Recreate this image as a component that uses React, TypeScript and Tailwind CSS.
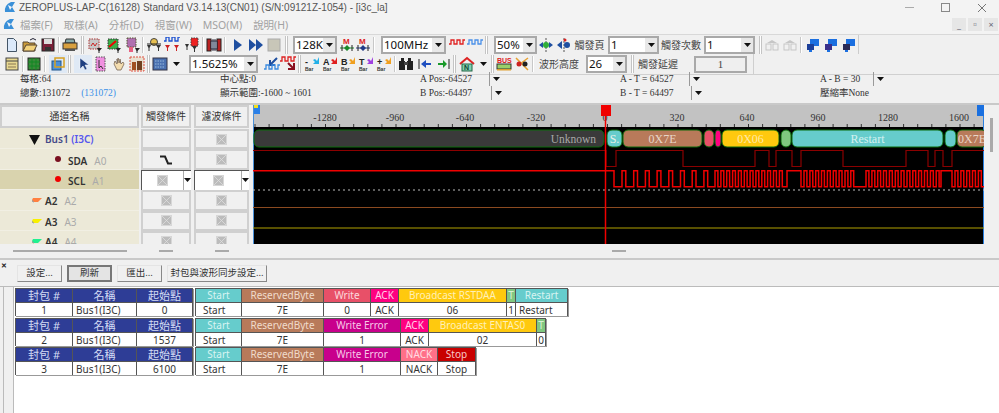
import React from "react";

const Svg = ({ children, w = 16 }: { children: React.ReactNode; w?: number }) => (
  <svg width={w} height={16} viewBox={`0 0 ${w} 16`} className="block shrink-0">
    {children}
  </svg>
);

const Btn = ({ children, on }: { children: React.ReactNode; on?: boolean }) => (
  <div className={`flex h-[18px] w-[18px] shrink-0 items-center justify-center ${on ? "bg-[#dfe9f5]" : ""}`}>{children}</div>
);

const Sep = () => <div className="mx-[1px] h-[16px] w-[2px] shrink-0 border-l border-[#c8c8c8] bg-white" />;
const Grip = () => <div className="mx-[1px] h-[18px] w-[3px] shrink-0 border-x border-[#c4c4c4] bg-white" />;

const Down = () => (
  <svg width="7" height="4" viewBox="0 0 7 4" className="block shrink-0">
    <path d="M0 0h7L3.5 4z" fill="#111" />
  </svg>
);

const Combo = ({ text, w }: { text: string; w: string }) => (
  <div className={`flex h-[18px] shrink-0 items-stretch border-2 border-[#a9a9a9] bg-white ${w}`}>
    <span className="flex-1 overflow-hidden pl-[1px] font-['Noto_Sans',sans-serif] text-[11.5px] leading-[14px] text-[#111]">{text}</span>
    <span className="flex w-[12px] shrink-0 items-center justify-center bg-[#e8e8e8]">
      <Down />
    </span>
  </div>
);

const Label = ({ text, w }: { text: string; w: string }) => (
  <span className={`shrink-0 text-center text-[10px] leading-[18px] text-[#444] ${w}`}>{text}</span>
);

const Chip = ({ c, s }: { c: string; s?: string }) => <rect x="3" y="2" width="10" height="10" fill={c} stroke={s ?? "#555"} strokeDasharray="1.5 1" />;
const Probe = ({ x = 11, c = "#222" }: { x?: number; c?: string }) => <path d={`M${x} 11h5l-2.5 3v2h-1v-2z`} fill={c} />;
const Wave = ({ c, y = 6 }: { c: string; y?: number }) => (
  <path d={`M0 ${y + 4}h2v-4h3v4h3v-4h3v4h3v-4h2`} fill="none" stroke={c} strokeWidth="1.3" />
);
const BlueNet = ({ d = "#1c3f99" }: { d?: string }) => (
  <>
    <rect x="5" y="2" width="9" height="7" fill="#1b6fe0" />
    <rect x="2" y="7" width="7" height="6" fill={d} />
    <rect x="4" y="13" width="3" height="2" fill="#1b6fe0" />
  </>
);
const Gray = () => (
  <>
    <path d="M3 6l5-3 5 3z" fill="#c6c6c6" />
    <rect x="2" y="7" width="5" height="6" fill="none" stroke="#c6c6c6" />
    <rect x="9" y="7" width="5" height="6" fill="none" stroke="#c6c6c6" />
  </>
);
const BarIc = ({ a, t }: { a: string; t: string }) => (
  <>
    <text x="1" y="9" fontSize="9" fontWeight="700" fill="#222" fontFamily="Liberation Sans">{t}</text>
    <path d="M15 1v7H9l2-2-2-2 2-1 2 2z" fill={a} />
    <text x="1" y="15" fontSize="5" fontWeight="700" fill="#333" fontFamily="Liberation Sans">Bar</text>
  </>
);
const MIc = ({ c }: { c: string }) => (
  <>
    <text x="4" y="7" fontSize="8" fontWeight="700" fill="#d22" fontFamily="Liberation Sans">M</text>
    <path d="M1 11h14" stroke={c} strokeWidth="1" />
    <path d="M3 8v6M13 8v6" stroke="#222" />
    <path d="M5 11l3-3v6zM11 11l-3-3v6z" fill={c} />
  </>
);

const Row1 = () => (
  <div className="flex h-[19px] items-center pl-[3px]">
    <Btn><Svg><path d="M3.5 1.5h6l3 3v10h-9z" fill="#dbe9fa" stroke="#456" /></Svg></Btn>
    <Btn><Svg><path d="M1 5h5l1 1h6v8H1z" fill="#c99a3a" stroke="#543" /><path d="M4 8h11l-3 6H1z" fill="#f3d27a" stroke="#543" /><path d="M8 3q3-3 6 0" fill="none" stroke="#223" /></Svg></Btn>
    <Btn><Svg><rect x="2" y="2" width="12" height="12" fill="#7a2038" stroke="#222" /><rect x="4" y="2" width="8" height="5" fill="#ddd" /><rect x="5" y="10" width="6" height="4" fill="#333" /></Svg></Btn>
    <Sep />
    <Btn><Svg><path d="M4 2h8l1 4H3z" fill="#8aa" stroke="#333" /><rect x="1" y="6" width="14" height="6" fill="#d8a040" stroke="#333" /><rect x="3" y="12" width="10" height="2" fill="#555" /></Svg></Btn>
    <div className="w-[1px]" />
    <Grip />
    <Btn><Svg><Chip c="#c8c8c8" s="#a33" /><path d="M5 9l2-3 2 3 2-3" stroke="#c22" fill="none" /><Probe /></Svg></Btn>
    <div className="w-[1px]" />
    <Btn><Svg><Chip c="#39b04a" s="#333" /><path d="M4 10l7-6" stroke="#e00" strokeWidth="2" /><Probe /></Svg></Btn>
    <div className="w-[1px]" />
    <Btn><Svg><rect x="3" y="1" width="9" height="9" fill="#b070b0" stroke="#553" strokeDasharray="1.5 1" /><rect x="5" y="10" width="4" height="5" fill="#e86080" /><Probe /></Svg></Btn>
    <Sep />
    <Btn><Svg><circle cx="8" cy="5" r="3.5" fill="#e8c050" stroke="#444" /><path d="M1 7h14" stroke="#222" /><path d="M1 8h4l-1.500 3v3h-1v-3zM10 8h5l-2 3v3h-1v-3z" fill="#333" /></Svg></Btn>
    <Btn><Svg><Wave c="#1b50d0" y={0} /><path d="M1 8h5l-2 3v3H3v-3zM10 8h5l-2 3v3h-1v-3z" fill="#c22" /></Svg></Btn>
    <div className="w-[2px]" />
    <Btn><Svg><rect x="7" y="1" width="7" height="8" fill="#e22" stroke="#444" strokeDasharray="1.5 1" /><path d="M1 7h4l-1.500 3v3h-1v-3zM8 9h5l-2 3v3h-1v-3z" fill="#333" /></Svg></Btn>
    <Sep />
    <Btn><Svg><rect x="1" y="2" width="4" height="12" fill="#b22" stroke="#222" /><rect x="11" y="2" width="4" height="12" fill="#b22" stroke="#222" /><path d="M5 4h6v8H5z" fill="#cfe0f0" stroke="#223" /><path d="M7 2v12M9 2v12" stroke="#334" /></Svg></Btn>
    <Sep />
    <div className="w-[2px]" />
    <Btn><Svg><path d="M4 2l8 6-8 6z" fill="#1f4fa0" /></Svg></Btn>
    <Btn><Svg><path d="M1 2l7 6-7 6zM8 2l7 6-7 6z" fill="#1f4fa0" /></Svg></Btn>
    <Btn><Svg><rect x="2" y="2" width="12" height="12" fill="#c8c6b8" stroke="#aaa" /></Svg></Btn>
    <div className="w-[1px]" />
    <Grip />
    <div className="w-[4px]" />
    <Combo text="128K" w="w-[44px]" />
    <div className="w-[1px]" />
    <Btn><Svg><MIc c="#1a8a2a" /></Svg></Btn>
    <div className="-ml-[2px]"><Btn><Svg><MIc c="#223a88" /></Svg></Btn></div>
    <Sep />
    <div className="w-[5px]" />
    <Combo text="100MHz" w="w-[65px]" />
    <div className="w-[2px]" />
    <Btn><Svg><Wave c="#e02020" y={3} /></Svg></Btn>
    <Btn><Svg><Wave c="#4a90e8" y={3} /></Svg></Btn>
    <Grip />
    <div className="w-[5px]" />
    <Combo text="50%" w="w-[43px]" />
    <Btn><Svg><path d="M8 1v14" stroke="#555" strokeDasharray="2 1" /><path d="M1 8l4-3v6zM15 8l-4-3v6z" fill="#1f4fa0" /><circle cx="8" cy="8" r="3" fill="#2fae3a" /></Svg></Btn>
    <Btn><Svg><path d="M8 1v14" stroke="#555" strokeDasharray="2 1" /><path d="M1 8l5-4v8z" fill="#1f4fa0" /><circle cx="11" cy="8" r="3" fill="#1f4fa0" /><circle cx="9" cy="3" r="1.500" fill="#d22" /></Svg></Btn>
    <Label text="觸發頁" w="w-[33px]" />
    <div className="w-[2px]" />
    <Combo text="1" w="w-[51px]" />
    <Label text="觸發次數" w="w-[44px]" />
    <div className="w-[1px]" />
    <Combo text="1" w="w-[51px]" />
    <div className="w-[3px]" />
    <Grip />
    <Btn><Svg><Gray /></Svg></Btn>
    <Btn><Svg><Gray /></Svg></Btn>
    <Sep />
    <div className="w-[1px]" />
    <Btn><Svg><BlueNet /></Svg></Btn>
    <Btn><Svg><BlueNet d="#3a2f8a" /></Svg></Btn>
    <Btn><Svg><BlueNet d="#2a2a55" /></Svg></Btn>
    <div className="h-full w-[1px] bg-[#ccc]" />
  </div>
);

const Row2 = () => (
  <div className="flex h-[20px] items-center pl-[3px]">
    <Btn><Svg><rect x="2" y="2" width="12" height="12" fill="#e8d890" stroke="#444" /><path d="M2 5h12" stroke="#444" /><path d="M4 8h8M4 11h8" stroke="#875" /></Svg></Btn>
    <Sep />
    <Btn><Svg><rect x="2" y="2" width="12" height="12" fill="#3a8a3a" stroke="#222" /><path d="M2 6h12M2 10h12M6 2v12M10 2v12" stroke="#182" /></Svg></Btn>
    <Sep />
    <div className="w-[2px]" />
    <Btn on><Svg><rect x="2" y="5" width="9" height="9" fill="#4a90d8" stroke="#258" /><rect x="5" y="2" width="9" height="9" fill="none" stroke="#d8a020" strokeWidth="1.500" /></Svg></Btn>
    <Grip />
    <div className="w-[2px]" />
    <Btn on><Svg><path d="M5 2v11l3-3 2 4 2-1-2-4h4z" fill="#1f3f80" stroke="#fff" strokeWidth=".5" /></Svg></Btn>
    <Btn><Svg><rect x="3" y="1" width="9" height="14" fill="#f090e0" stroke="#555" strokeDasharray="1.5 1" /><path d="M6 4v8l2-2 2 3" fill="none" stroke="#333" /></Svg></Btn>
    <Btn><Svg><path d="M3 8l1-3 2 3V3l1 4V2l2 5V3l1 5 2-2 1 2-3 6H6z" fill="#f3dcae" stroke="#765" strokeWidth=".8" /></Svg></Btn>
    <Btn><Svg><rect x="1" y="1" width="14" height="14" fill="#e8e0d0" stroke="#e05040" strokeDasharray="2 1" /><rect x="3" y="6" width="4" height="8" fill="#a05020" /><rect x="8" y="5" width="5" height="9" fill="#704020" /></Svg></Btn>
    <Grip />
    <Btn><Svg><rect x="1" y="2" width="14" height="12" fill="#4a70b0" stroke="#334" /><path d="M3 5h10M3 8h10M3 11h10" stroke="#9bd" strokeDasharray="1.5 1" /></Svg></Btn>
    <div className="flex w-[14px] shrink-0 items-center justify-center"><Down /></div>
    <div className="w-[6px]" />
    <Combo text="1.5625%" w="w-[69px]" />
    <div className="w-[5px]" />
    <Btn><Svg><path d="M13 2L7 8M6 4v5h5" stroke="#1f4fa0" strokeWidth="2" fill="none" /><Wave c="#3a8ae0" y={9} /></Svg></Btn>
    <div className="-ml-[2px]"><Btn><Svg><Wave c="#d22" y={1} /><path d="M8 7l5 5M14 7v6H8" stroke="#8a1020" strokeWidth="2" fill="none" /></Svg></Btn></div>
    <Grip />
    <div className="w-[1px]" />
    <Btn><Svg><BarIc a="#22b0e8" t="-" /></Svg></Btn>
    <Btn><Svg><BarIc a="#e02020" t="A" /></Svg></Btn>
    <Btn><Svg><BarIc a="#f0a020" t="B" /></Svg></Btn>
    <Btn><Svg><BarIc a="#a040e0" t="T" /></Svg></Btn>
    <Btn><Svg><BarIc a="#f0a020" t="+" /></Svg></Btn>
    <Sep />
    <Btn><Svg><rect x="1" y="5" width="6" height="9" fill="#222" /><rect x="9" y="5" width="6" height="9" fill="#222" /><rect x="3" y="2" width="3" height="5" fill="#222" /><rect x="10" y="2" width="3" height="5" fill="#222" /><rect x="6" y="6" width="4" height="3" fill="#444" /></Svg></Btn>
    <div className="w-[1px]" />
    <Btn><Svg><path d="M2 3v10" stroke="#222" /><path d="M4 8l5-4v3h5v2H9v3z" fill="#1f4fc0" /></Svg></Btn>
    <Btn><Svg><path d="M14 3v10" stroke="#222" /><path d="M12 8L8 4v3H3v2h5v3z" fill="#1a9a2a" /></Svg></Btn>
    <Grip />
    <div className="w-[1px]" />
    <Btn><Svg><path d="M1 8l7-6 7 6" fill="none" stroke="#d22" strokeWidth="2" /><rect x="3" y="8" width="10" height="7" fill="#7fd0b0" stroke="#264" /><text x="5" y="14" fontSize="7" fontWeight="700" fill="#143" fontFamily="Liberation Sans">N</text></Svg></Btn>
    <div className="flex w-[14px] shrink-0 items-center justify-center"><Down /></div>
    <Grip />
    <Btn><Svg><text x="1" y="7" fontSize="7" fontWeight="700" fill="#d22" fontFamily="Liberation Sans">BUS</text><rect x="1" y="8" width="14" height="5" fill="#9ad06a" stroke="#333" /><rect x="1" y="13" width="14" height="1.500" fill="#e0a030" /></Svg></Btn>
    <Btn><Svg><path d="M2 2l12 12M14 2L6 8" stroke="#e8a030" strokeWidth="1.500" /><circle cx="5" cy="8" r="2.500" fill="#c22" /><circle cx="11" cy="8" r="2.500" fill="#222" /></Svg></Btn>
    <Sep />
    <div className="w-[4px]" />
    <Label text="波形高度" w="w-[40px]" />
    <div className="w-[7px]" />
    <Combo text="26" w="w-[41px]" />
    <div className="w-[3px]" />
    <Grip />
    <div className="w-[3px]" />
    <Label text="觸發延遲" w="w-[40px]" />
    <div className="w-[16px]" />
    <div className="flex h-[17px] w-[53px] shrink-0 items-center justify-center border-2 border-[#a9a9a9] bg-[#efefef] font-['Liberation_Serif',serif] text-[11px] text-[#444]">1</div>
    <div className="ml-[6px] h-full w-[1px] bg-[#cfcfcf]" />
  </div>
);

const Arrow = () => (
  <span className="flex h-[14px] items-center gap-[2px] border-l border-[#999] pl-[3px]">
    <Down />
  </span>
);

const Info = () => (
  <div className="-mt-[3px] grid h-[33px] grid-cols-[200px_200px_200px_200px_1fr] grid-rows-[14px_14px] content-start border-b-2 border-[#c9c9c9] pl-[20px] font-['Liberation_Serif','Noto_Sans_CJK_TC',serif] text-[9.500px] leading-[14px] text-[#333]">
    <span>每格:64</span>
    <span>中心點:0</span>
    <span className="flex justify-between pr-[120px]"><span>A Pos:-64527</span><Arrow /></span>
    <span className="flex justify-between pr-[120px]"><span>A - T = 64527</span><Arrow /></span>
    <span className="flex justify-between pr-[115px]"><span>A - B = 30</span><Arrow /></span>
    <span className="flex gap-[11px]"><span>總數:131072</span><span className="text-[#3a90e8]">(131072)</span></span>
    <span>顯示範圍:-1600 ~ 1601</span>
    <span className="flex justify-between pr-[118px]"><span>B Pos:-64497</span><Arrow /></span>
    <span className="flex justify-between pr-[118px]"><span>B - T = 64497</span><Arrow /></span>
    <span>壓縮率None</span>
  </div>
);

const HeadCell = ({ t, w }: { t: string; w: string }) => (
  <div className={`flex h-[23px] items-center justify-center border-2 border-[#cfcfcf] bg-[#f0f0f0] text-[10px] text-[#333] ${w}`}>{t}</div>
);

const XBox = () => (
  <svg width="11" height="11" viewBox="0 0 11 11" className="block">
    <rect width="11" height="11" fill="#bcbcbc" />
    <path d="M0.500 0.500h10v10h-10zM0.500 0.500l10 10M10.500 0.500l-10 10" fill="none" stroke="#dedede" strokeWidth=".8" />
  </svg>
);

const Edge = () => (
  <svg width="12" height="10" viewBox="0 0 12 10" className="block">
    <path d="M0 1.500h5l3 7h4" fill="none" stroke="#222" strokeWidth="2" />
  </svg>
);

const Cond = ({ children, sel }: { children?: React.ReactNode; sel?: boolean }) =>
  sel ? (
    <div className="flex h-[20.4px] items-stretch border-l border-t border-[#555] bg-white">
      <div className="flex flex-1 items-center justify-center">{children}</div>
      <div className="flex w-[8px] items-center justify-center border-l border-[#aaa]"><Down /></div>
    </div>
  ) : (
    <div className="flex h-[20.4px] items-center justify-center border-2 border-[#d0d0d0] bg-[#f0f0f0]">{children}</div>
  );

const Dot = ({ c }: { c: string }) => <span className={`mr-[4px] mb-[4px] h-[6px] w-[6px] rounded-full ${c}`} />;
const Flag = ({ c }: { c: string }) => (
  <svg width="10" height="7" viewBox="0 0 10 7" className="block mb-[3px]">
    <path d="M1 2h9L6 6H2Q0 6 0 4z" fill={c} />
    <path d="M0 4q0 2 2 2" stroke="#999" fill="none" />
  </svg>
);

const Name = ({ t, a, sel, icon, left }: { t: string; a: string; sel?: boolean; icon: React.ReactNode; left: string }) => (
  <div className={`flex h-[20.4px] items-center gap-[3px] border-b border-[#f1efe3] pt-[3px] ${left} ${sel ? "bg-[#d9d3ae]" : ""}`}>
    {icon}
    <span className="mr-[4px] font-['Noto_Sans',sans-serif] text-[10px] font-semibold leading-[12px] text-[#333]">{t}</span>
    <span className="font-['Noto_Sans',sans-serif] text-[10px] leading-[12px] text-[#aaa]">{a}</span>
  </div>
);

const scl = () => {
  const p: number[] = [];
  const add = (s: number, per: number, n: number, hi: number) => {
    for (let i = 0; i < n; i++) {
      p.push(s + i * per, s + i * per + hi);
    }
  };
  add(622 - 253, 11.7, 8, 3.8);
  add(715 - 253, 5.85, 12, 2.9);
  p.push(787 - 253, 801 - 253);
  add(804 - 253, 5.85, 9, 2.9);
  add(866 - 253, 5.85, 13, 2.9);
  p.push(941 - 253, 952 - 253);
  add(955 - 253, 5.85, 5, 2.9);
  let d = `M0 65.700H${614 - 253}V81.700`;
  for (let i = 0; i < p.length; i += 2) {
    d += `H${p[i].toFixed(1)}V65.700H${p[i + 1].toFixed(1)}V81.700`;
  }
  return d + "H731";
};

const sda = () => {
  const e = [606, 616, 683, 755, 769, 776, 792, 801, 843, 906, 928, 935, 943, 952];
  let d = "M0 45.500";
  let hi = true;
  for (const x of e) {
    d += `H${x - 253}V${hi ? 61.5 : 45.5}`;
    hi = !hi;
  }
  return d + "H731";
};

const Seg = ({ x, w, c, t, tc }: { x: number; w: number; c: string; t?: string; tc?: string }) => (
  <>
    <rect x={x - 253} y={25} width={w} height={17} rx={5} fill={c} stroke="#0a6a0a" />
    {t && (
      <text x={x - 253 + w / 2} y={38} textAnchor="middle" fontSize="12" fontFamily="Liberation Serif" fill={tc ?? "#e8f0e8"}>{t}</text>
    )}
  </>
);

const WaveChart = () => {
  const ticks: number[] = [];
  for (let x = 2; x < 731; x += 14.1) ticks.push(x);
  const labels: [string, number][] = [
    ["-1280", 72], ["-960", 142], ["-640", 212], ["-320", 283], ["0", 352], ["320", 424], ["640", 494], ["960", 565], ["1280", 635], ["1600", 706],
  ];
  return (
    <svg width="731" height="139" viewBox="0 0 731 139" className="block">
      <rect width="731" height="22" fill="#c2c2c2" />
      <rect y="22" width="731" height="117" fill="#000" />
      <path d="M0.500 0v139" stroke="#4a90d8" />
      <path d="M730.500 0v139" stroke="#2a80e0" />
      {ticks.map((x, i) => (
        <path key={i} d={`M${x.toFixed(1)} 19v3`} stroke="#333" />
      ))}
      {labels.map(([t, x]) => (
        <text key={t} x={x} y={16} textAnchor="middle" fontSize="10" fill="#333" fontFamily="Liberation Serif">{t}</text>
      ))}
      <rect x="1" y="0" width="6" height="9" fill="#2a80e8" />
      <rect x="1" y="0" width="4" height="3" fill="#f0e020" />
      <rect x="724" y="0" width="7" height="11" fill="#1a70e0" />
      <rect x="1" y="25" width="350" height="17" rx="5" fill="#3a3a3a" stroke="#0a6a0a" />
      <text x="343" y="38" textAnchor="end" fontSize="11.500" fontFamily="Liberation Serif" fill="#a8a8a8">Unknown</text>
      <Seg x={607} w={15} c="#66cccc" t="S." />
      <Seg x={623} w={79} c="#b87a5a" t="0X7E" tc="#e8d6c8" />
      <Seg x={704} w={10} c="#e85068" />
      <Seg x={715} w={6} c="#ff0080" />
      <Seg x={722} w={57} c="#ffc90e" t="0X06" tc="#ffe9a8" />
      <Seg x={781} w={10} c="#80c880" />
      <Seg x={792} w={151} c="#66cccc" t="Restart" tc="#d6f2f0" />
      <Seg x={945} w={11} c="#66cccc" />
      <Seg x={957} w={30} c="#b87a5a" t="0X7E" tc="#e8d6c8" />
      <path d={sda()} fill="none" stroke="#8b0000" strokeWidth="1.200" />
      <path d={scl()} fill="none" stroke="#f00000" strokeWidth="1.500" />
      <path d="M0 85h731" stroke="#bbb" strokeDasharray="2 3" />
      <path d="M0 102.500h731" stroke="#8b4a20" />
      <path d="M0 123h731" stroke="#b0a000" />
      <path d="M352.500 0v139" stroke="#f00000" strokeWidth="1.500" />
      <rect x="348" y="0" width="10" height="11" fill="#f00000" />
    </svg>
  );
};

const HBar = ({ w }: { w: string }) => (
  <div className="flex h-[14px] items-center justify-center bg-[#f0f0f0]"><span className={`h-[2px] bg-[#aaa] ${w}`} /></div>
);

const Top = () => (
  <div className="flex h-[155px] border-b-2 border-[#c9c9c9]">
    <div className="flex w-[139px] shrink-0 flex-col">
      <HeadCell t="通道名稱" w="w-full" />
      <div className="h-[116px] overflow-hidden bg-[#ece9d8] pt-[1px]">
        <div className="flex h-[20.4px] items-center border-b border-[#f1efe3] pl-[29px] pt-[2px] font-['Noto_Sans',sans-serif] text-[10px] font-semibold text-[#444a88]">
          <svg width="11" height="10" viewBox="0 0 11 10" className="mr-[5px] block"><path d="M0 0h11L5.500 10z" fill="#111" /></svg>
          Bus1&nbsp;<span className="text-[#5555ee]">(I3C)</span>
        </div>
        <Name t="SDA" a="A0" left="pl-[55px]" icon={<Dot c="bg-[#7a1020]" />} />
        <Name t="SCL" a="A1" left="pl-[55px]" sel icon={<Dot c="bg-[#f00000]" />} />
        <Name t="A2" a="A2" left="pl-[32px]" icon={<Flag c="#ff8040" />} />
        <Name t="A3" a="A3" left="pl-[32px]" icon={<Flag c="#f8f000" />} />
        <Name t="A4" a="A4" left="pl-[32px]" icon={<Flag c="#20f090" />} />
      </div>
      <HBar w="w-[114px]" />
    </div>
    <div className="w-[2px] shrink-0" />
    <div className="flex w-[50px] shrink-0 flex-col">
      <HeadCell t="觸發條件" w="w-full" />
      <div className="h-[116px] overflow-hidden pt-[1px]">
        <Cond />
        <Cond><Edge /></Cond>
        <Cond sel><XBox /></Cond>
        <Cond><XBox /></Cond>
        <Cond><XBox /></Cond>
        <Cond><XBox /></Cond>
      </div>
      <HBar w="w-[14px]" />
    </div>
    <div className="w-[3px] shrink-0" />
    <div className="flex w-[55px] shrink-0 flex-col">
      <HeadCell t="濾波條件" w="w-full" />
      <div className="h-[116px] overflow-hidden pt-[1px]">
        <Cond><XBox /></Cond>
        <Cond><XBox /></Cond>
        <Cond sel><XBox /></Cond>
        <Cond><XBox /></Cond>
        <Cond><XBox /></Cond>
        <Cond><XBox /></Cond>
      </div>
      <HBar w="w-[14px]" />
    </div>
    <div className="w-[4px] shrink-0" />
    <div className="flex w-[731px] shrink-0 flex-col">
      <WaveChart />
      <HBar w="w-[14px]" />
    </div>
    <div className="flex w-[15px] shrink-0 justify-center bg-[#f0f0f0] pt-[13px]">
      <span className="h-[34px] w-[3px] bg-[#aaa]" />
    </div>
  </div>
);

const ToolBtn = ({ t, w, on }: { t: string; w: string; on?: boolean }) => (
  <div className={`flex h-[17px] shrink-0 items-center justify-center whitespace-nowrap text-[9.500px] text-[#333] ${w} ${on ? "border-2 border-[#777] bg-[#e4e4e4]" : "border border-[#e4e4e4] border-r-[#888] border-b-[#888] bg-[#f0f0f0]"}`}>{t}</div>
);

type C = { h: string; v: string; w: string; bg: string; tc: string; left?: string; big?: boolean };

const Col = ({ h, v, w, bg, tc, left, big }: C) => (
  <div className={`shrink-0 border-r border-[#555] ${w}`}>
    <div className={`h-[14px] border-b border-[#555] text-center leading-[13px] ${big ? "text-[11px]" : "text-[10px]"} ${bg} ${tc}`}>{h}</div>
    <div className={`h-[13px] bg-white text-[10px] leading-[14px] text-[#333] ${left ?? "text-center"}`}>{v}</div>
  </div>
);

const N = "bg-[#2e3d96]";
const NT = "text-[#d4dcf4]";

const Packet = ({ no, start, cols }: { no: string; start: string; cols: C[] }) => (
  <div className="flex h-[29.600px] pl-[1px]">
    <div className="flex h-[28px] border-y border-l border-[#555] shadow-[1px_1px_0_#999]">
      <Col h="封包 #" v={no} w="w-[57px]" bg={N} tc={NT} big />
      <Col h="名稱" v="Bus1(I3C)" w="w-[64px]" bg={N} tc={NT} big left="pl-[3px]" />
      <Col h="起始點" v={start} w="w-[56px]" bg={N} tc={NT} big />
    </div>
    <div className="w-[2px] shrink-0" />
    <div className="flex h-[28px] border-y border-l border-[#555] shadow-[1px_1px_0_#999]">
      {cols.map((c, i) => (
        <Col key={i} {...c} />
      ))}
    </div>
  </div>
);

const ST: C = { h: "Start", v: "Start", w: "w-[46px]", bg: "bg-[#66cccc]", tc: "text-[#d8f4f2]", left: "pl-[7px]" };
const RB: C = { h: "ReservedByte", v: "7E", w: "w-[82px]", bg: "bg-[#b87a5a]", tc: "text-[#f0dccc]" };
const WE: C = { h: "Write Error", v: "1", w: "w-[77px]", bg: "bg-[#c8008c]", tc: "text-[#f8c8e8]" };
const AC: C = { h: "ACK", v: "ACK", w: "w-[28px]", bg: "bg-[#ff0080]", tc: "text-[#ffd0e8]" };
const TT = (v: string): C => ({ h: "T", v, w: "w-[9px]", bg: "bg-[#80c880]", tc: "text-[#d8f0d8]" });

const Bottom = () => (
  <div className="flex flex-1 flex-col">
    <div className="flex h-[27px] items-center border-b border-[#bbb] bg-[#f0f0f0]">
      <span className="mb-[15px] w-[17px] pl-[1px] font-['Liberation_Sans',sans-serif] text-[7px] font-bold leading-[8px] text-[#222]">✕</span>
      <div className="flex gap-[5px]">
        <ToolBtn t="設定..." w="w-[45px]" />
        <ToolBtn t="刷新" w="w-[45px]" on />
        <ToolBtn t="匯出..." w="w-[45px]" />
        <ToolBtn t="封包與波形同步設定..." w="w-[100px]" />
      </div>
    </div>
    <div className="flex flex-1">
      <div className="w-[3px] bg-[#f0f0f0]" />
      <div className="w-[1px] bg-[#bbb]" />
      <div className="w-[10px] border-r border-[#bbb] bg-[#f0f0f0]" />
      <div className="flex-1 bg-white pt-[1px] font-['Noto_Sans','Noto_Sans_CJK_TC',sans-serif]">
        <Packet no="1" start="0" cols={[
          ST, RB,
          { h: "Write", v: "0", w: "w-[47px]", bg: "bg-[#e85068]", tc: "text-[#fcd8dc]" },
          AC,
          { h: "Broadcast RSTDAA", v: "06", w: "w-[108px]", bg: "bg-[#ffc90e]", tc: "text-[#fff0b8]" },
          TT("1"),
          { h: "Restart", v: "Restart", w: "w-[52px]", bg: "bg-[#66cccc]", tc: "text-[#d8f4f2]", left: "pl-[3px]" },
        ]} />
        <Packet no="2" start="1537" cols={[
          ST, RB, WE, AC,
          { h: "Broadcast ENTAS0", v: "02", w: "w-[108px]", bg: "bg-[#ffc90e]", tc: "text-[#fff0b8]" },
          TT("0"),
        ]} />
        <Packet no="3" start="6100" cols={[
          ST, RB, WE,
          { h: "NACK", v: "NACK", w: "w-[37px]", bg: "bg-[#ff7088]", tc: "text-[#ffdce2]" },
          { h: "Stop", v: "Stop", w: "w-[38px]", bg: "bg-[#c80000]", tc: "text-[#f8c8c8]" },
        ]} />
      </div>
    </div>
  </div>
);

const Mdi = ({ children }: { children: React.ReactNode }) => (
  <span className="flex h-[13px] w-[14px] items-center justify-center bg-[#e6e6e6] text-[9px] leading-[13px] text-[#667]">{children}</span>
);

const AppIcon = () => (
  <svg width="13" height="13" viewBox="0 0 13 13" className="block shrink-0">
    <path d="M2 11Q1 4 8 1L12 1 9 6l3 5z" fill="#3a90d8" />
    <path d="M5 4l4 2-2 3z" fill="#f0f4fa" />
  </svg>
);

export default function App() {
  return (
    <div className="flex h-[413px] w-[999px] flex-col overflow-hidden bg-[#f0f0f0] font-['Noto_Sans','Noto_Sans_CJK_TC',sans-serif]">
      <div className="flex h-[15px] items-center bg-[#f3f3f3] pl-[3px]">
        <AppIcon />
        <span className="ml-[3px] flex-1 font-['Liberation_Sans',sans-serif] text-[10px] text-[#555]">ZEROPLUS-LAP-C(16128) Standard V3.14.13(CN01) (S/N:09121Z-1054) - [i3c_la]</span>
        <div className="flex items-center gap-[27px] pr-[12px]">
          <span className="h-[1px] w-[9px] bg-[#aaa]" />
          <span className="h-[9px] w-[9px] border border-[#888]" />
          <svg width="10" height="10" viewBox="0 0 10 10" className="block"><path d="M1 1l8 8M9 1L1 9" stroke="#777" /></svg>
        </div>
      </div>
      <div className="flex h-[19px] items-center bg-[#f3f3f3] pl-[2px] text-[10.500px] leading-[14px] text-[#a2a2a2]">
        <AppIcon />
        <div className="ml-[5px] flex flex-1 gap-[11px]">
          <span>檔案(F)</span>
          <span>取樣(A)</span>
          <span>分析(D)</span>
          <span>視窗(W)</span>
          <span>MSO(M)</span>
          <span>說明(H)</span>
        </div>
        <div className="flex gap-[2px] pr-[1px]">
          <Mdi>_</Mdi>
          <Mdi>▫</Mdi>
          <Mdi>×</Mdi>
        </div>
      </div>
      <div className="border-t border-[#d8d8d8]">
        <Row1 />
        <Row2 />
      </div>
      <div className="border-t border-[#d0d0d0]">
        <Info />
      </div>
      <Top />
      <Bottom />
    </div>
  );
}
